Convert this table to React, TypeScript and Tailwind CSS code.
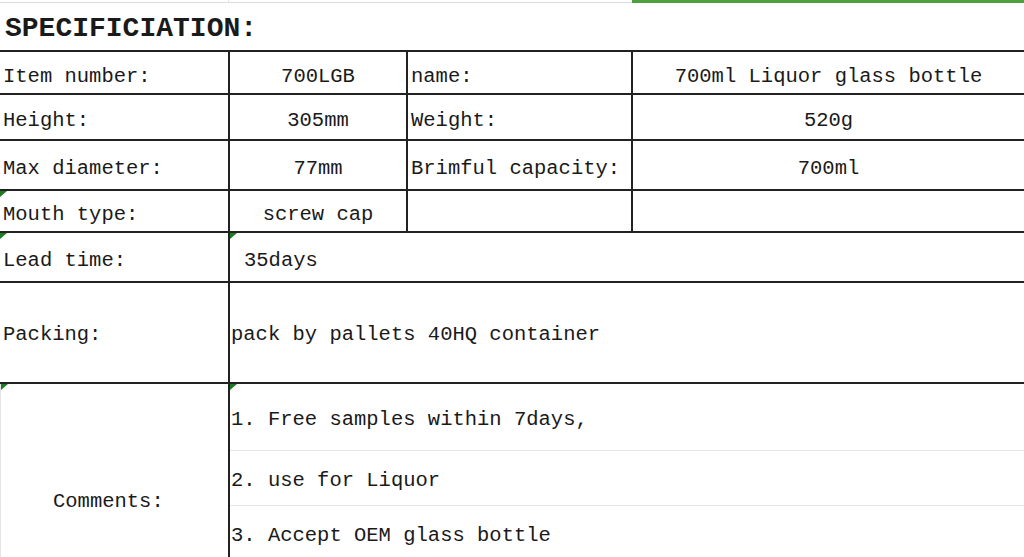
import React from "react";

const mono = { fontFamily: '"Liberation Mono", "DejaVu Sans Mono", monospace' };

function Tri() {
  return (
    <svg className="absolute left-0 top-0" width="7" height="6" viewBox="0 0 7 6">
      <polygon points="0,0 7,0 0,6" fill="#1f7a24" />
    </svg>
  );
}

function Cell({
  w,
  children,
  center,
  last,
  tri,
  pl = "pl-[3px]",
  pt = "pt-[9px]",
}: {
  w?: string;
  children?: React.ReactNode;
  center?: boolean;
  last?: boolean;
  tri?: boolean;
  pl?: string;
  pt?: string;
}) {
  return (
    <div
      className={`relative flex items-center whitespace-pre ${pt} ${w ?? "flex-1"} ${
        last ? "" : "border-r-2 border-[#222]"
      } ${center ? "justify-center" : pl}`}
    >
      {tri && <Tri />}
      {children}
    </div>
  );
}

export default function App() {
  return (
    <div
      className="h-[557px] w-[1024px] overflow-hidden bg-white text-[20.5px] text-[#1a1a1a]"
      style={mono}
    >
      {/* top strip */}
      <div className="flex h-[3px]">
        <div className="flex w-[632px] border-b border-[#dcdcdc]">
          <div className="w-[229px] border-r border-[#e2e2e2]" />
        </div>
        <div className="flex-1 bg-[#4e9f3d]" />
      </div>
      {/* title */}
      <div className="flex h-[47px] items-center pl-[5px] pt-[5px] text-[28px] font-bold">
        SPECIFICIATION:
      </div>

      {/* row 1 */}
      <div className="flex h-[43px] border-t-2 border-[#222]">
        <Cell w="w-[230px]">Item number:</Cell>
        <Cell w="w-[178px]" center>
          700LGB
        </Cell>
        <Cell w="w-[225px]">name:</Cell>
        <Cell center last>
          700ml Liquor glass bottle
        </Cell>
      </div>
      {/* row 2 */}
      <div className="flex h-[46px] border-t-2 border-[#222]">
        <Cell w="w-[230px]">Height:</Cell>
        <Cell w="w-[178px]" center>
          305mm
        </Cell>
        <Cell w="w-[225px]">Weight:</Cell>
        <Cell center last>
          520g
        </Cell>
      </div>
      {/* row 3 */}
      <div className="flex h-[50px] border-t-2 border-[#222]">
        <Cell w="w-[230px]">Max diameter:</Cell>
        <Cell w="w-[178px]" center>
          77mm
        </Cell>
        <Cell w="w-[225px]">Brimful capacity:</Cell>
        <Cell center last>
          700ml
        </Cell>
      </div>
      {/* row 4 */}
      <div className="flex h-[42px] border-t-2 border-[#222]">
        <Cell w="w-[230px]" tri>
          Mouth type:
        </Cell>
        <Cell w="w-[178px]" center>
          screw cap
        </Cell>
        <Cell w="w-[225px]"></Cell>
        <Cell last></Cell>
      </div>
      {/* row 5 */}
      <div className="flex h-[50px] border-t-2 border-[#222]">
        <Cell w="w-[230px]" tri>
          Lead time:
        </Cell>
        <Cell last tri pl="pl-[14px]">
          35days
        </Cell>
      </div>
      {/* row 6 */}
      <div className="flex h-[101px] border-t-2 border-[#222]">
        <Cell w="w-[230px]" pt="pt-[5px]">
          Packing:
        </Cell>
        <Cell last pl="pl-[1px]" pt="pt-[5px]">
          pack by pallets 40HQ container
        </Cell>
      </div>
      {/* row 7 */}
      <div className="flex h-[178px] border-t-2 border-[#222]">
        <div className="relative flex w-[230px] justify-center border-r-2 border-l border-[#222] border-l-[#e4e4e4] pt-[103px] whitespace-pre">
          <Tri />
          <span className="leading-normal">Comments: </span>
        </div>
        <div className="relative flex flex-1 flex-col">
          <Tri />
          <div className="flex h-[67px] items-center border-b border-[#e6e6e6] pl-[1px] pt-[7px] whitespace-pre">
            1. Free samples within 7days,
          </div>
          <div className="flex h-[55px] items-center border-b border-[#e6e6e6] pl-[1px] pt-[7px] whitespace-pre">
            2. use for Liquor
          </div>
          <div className="flex h-[54px] items-center pl-[1px] pt-[7px] whitespace-pre">
            3. Accept OEM glass bottle
          </div>
        </div>
      </div>
    </div>
  );
}
